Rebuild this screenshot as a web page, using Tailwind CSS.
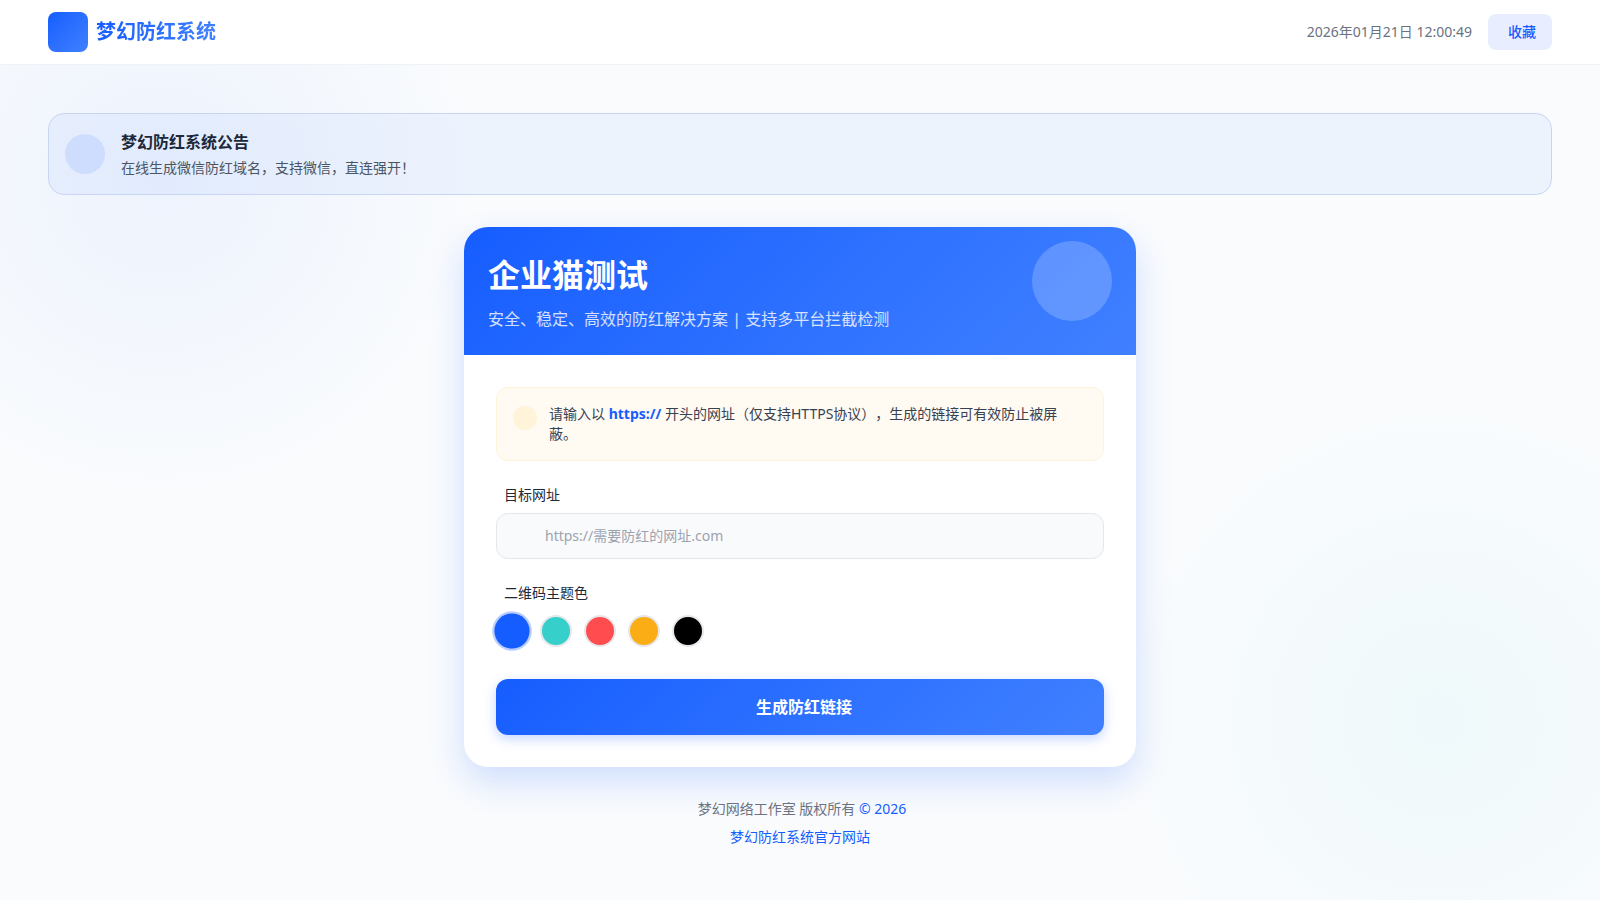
<!DOCTYPE html>
<html lang="zh-CN">
<head>
<meta charset="utf-8">
<meta name="viewport" content="width=device-width, initial-scale=1">
<title>梦幻防红系统</title>
<script src="https://cdn.jsdelivr.net/npm/@tailwindcss/browser@4"></script>
</head>
<body class="min-h-screen bg-[#f9fbfd] bg-[radial-gradient(circle_at_10%_20%,rgba(22,93,255,0.05)_0%,transparent_20%),radial-gradient(circle_at_90%_80%,rgba(54,207,201,0.05)_0%,transparent_20%)] font-['Noto_Sans','Noto_Sans_CJK_SC',sans-serif] text-sm text-[#1d2939]">
  <header class="flex items-center justify-between border-b border-[#f0f3f6] bg-white px-12 py-3">
    <div class="flex items-center gap-2">
      <span class="size-10 rounded-lg bg-linear-135 from-[#165dff] to-[#4080ff]"></span>
      <span class="bg-linear-90 from-[#165dff] to-[#4080ff] bg-clip-text text-xl font-bold text-transparent">梦幻防红系统</span>
    </div>
    <div class="flex items-center gap-4">
      <time class="text-[#6b7280]">2026年01月21日 12:00:49</time>
      <button type="button" class="h-9 rounded-lg bg-[#e8eeff] pl-5 pr-4 font-medium text-[#165dff]">收藏</button>
    </div>
  </header>

  <main class="px-12 pt-12">
    <section class="flex items-center gap-4 rounded-2xl border border-[#c9d6f3] bg-[#165dff]/5 p-4">
      <span class="size-10 shrink-0 rounded-full bg-[#165dff]/10"></span>
      <div>
        <h2 class="text-base font-bold">梦幻防红系统公告</h2>
        <p class="mt-1 text-[#4b5563]">在线生成微信防红域名，支持微信，直连强开！</p>
      </div>
    </section>

    <section class="mx-auto mt-8 max-w-2xl rounded-3xl bg-white shadow-[0_15px_35px_rgba(22,93,255,0.18)]">
      <div class="relative rounded-t-3xl bg-linear-135 from-[#165dff] to-[#4080ff] p-6 text-white">
        <h1 class="text-[32px] leading-12 font-bold">企业猫测试</h1>
        <p class="mt-2 text-base text-white/80">安全、稳定、高效的防红解决方案 | 支持多平台拦截检测</p>
        <span class="absolute top-3.5 right-6 size-20 rounded-full bg-white/20"></span>
      </div>

      <form class="p-8">
        <div class="flex items-start gap-3 rounded-xl border border-[#fcf3d8] bg-[#fffaf2] p-4">
          <span class="mt-0.5 size-6 shrink-0 rounded-full bg-[#fff3da]"></span>
          <p class="pr-3 text-[#374151] [text-spacing-trim:space-all]">请输入以 <strong class="font-bold text-[#165dff]">https://</strong> 开头的网址（仅支持HTTPS协议），生成的链接可有效防止被屏蔽。</p>
        </div>

        <label for="url" class="mt-6 block pl-2 text-[#1f2937]">目标网址</label>
        <input id="url" type="text" placeholder="https://需要防红的网址.com" class="mt-2 block w-full rounded-xl border border-[#e5e7eb] bg-[#f9fafb] py-3 pr-4 pl-12 leading-5 placeholder:text-[#9ca3af]">

        <fieldset class="mt-6">
          <legend class="pl-2 text-[#1f2937]">二维码主题色</legend>
          <div class="mt-3 flex gap-3">
            <input type="radio" name="color" aria-label="蓝色" checked class="size-8 scale-110 appearance-none rounded-full bg-[#165dff] shadow-[0_0_0_2px_rgba(22,93,255,0.3)]">
            <input type="radio" name="color" aria-label="青色" class="size-8 appearance-none rounded-full border-2 border-[#e5e7eb] bg-[#36cfc9]">
            <input type="radio" name="color" aria-label="红色" class="size-8 appearance-none rounded-full border-2 border-[#e5e7eb] bg-[#ff4d4f]">
            <input type="radio" name="color" aria-label="橙色" class="size-8 appearance-none rounded-full border-2 border-[#e5e7eb] bg-[#faad14]">
            <input type="radio" name="color" aria-label="黑色" class="size-8 appearance-none rounded-full border-2 border-[#e5e7eb] bg-black">
          </div>
        </fieldset>

        <button type="submit" class="mt-8 block h-14 w-full rounded-xl bg-linear-135 from-[#165dff] to-[#4080ff] pl-2 text-base font-bold text-white shadow-[0_4px_12px_rgba(22,93,255,0.25)]">生成防红链接</button>
      </form>
    </section>
  </main>

  <footer class="px-12 pt-8 pb-12 text-center text-[#6b7280]">
    <p class="pl-1">梦幻网络工作室 版权所有 <a href="#" class="text-[#165dff]">© 2026</a></p>
    <p class="mt-2"><a href="#" class="text-[#165dff]">梦幻防红系统官方网站</a></p>
  </footer>
</body>
</html>
